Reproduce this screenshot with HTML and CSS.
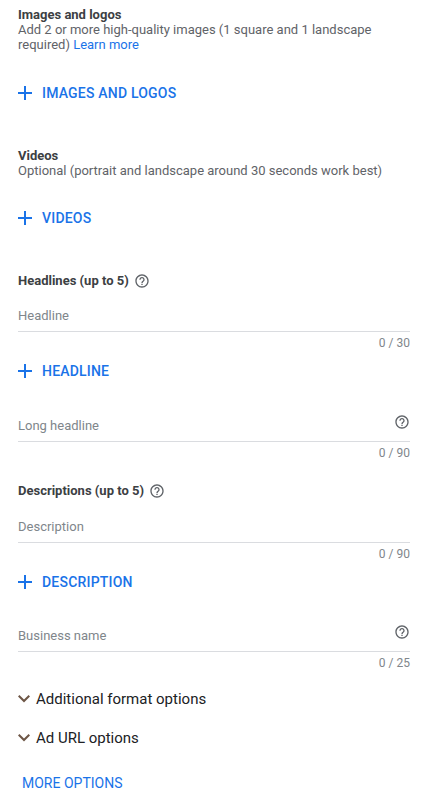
FILE: index.html
```
<!DOCTYPE html>
<html>
<head>
<meta charset="utf-8">
<link rel="stylesheet" href="styles.css">
</head>
<body>
<div class="page">
  <div class="title">Images and logos</div>
  <div class="desc">Add 2 or more high-quality images (1 square and 1 landscape required) <a class="link">Learn more</a></div>
  <div class="add add-images"><svg class="plus" viewBox="5 5 14 14"><path d="M19 13h-6v6h-2v-6H5v-2h6V5h2v6h6v2z"/></svg><span>IMAGES AND LOGOS</span></div>

  <div class="title title-videos">Videos</div>
  <div class="desc">Optional (portrait and landscape around 30 seconds work best)</div>
  <div class="add add-videos"><svg class="plus" viewBox="5 5 14 14"><path d="M19 13h-6v6h-2v-6H5v-2h6V5h2v6h6v2z"/></svg><span>VIDEOS</span></div>

  <div class="label label-headlines">Headlines (up to 5) <svg class="help" viewBox="0 0 24 24"><path d="M11 18h2v-2h-2v2zm1-16C6.48 2 2 6.48 2 12s4.48 10 10 10 10-4.48 10-10S17.52 2 12 2zm0 18c-4.41 0-8-3.59-8-8s3.59-8 8-8 8 3.59 8 8-3.59 8-8 8zm0-14c-2.21 0-4 1.79-4 4h2c0-1.1.9-2 2-2s2 .9 2 2c0 2-3 1.75-3 5h2c0-2.25 3-2.5 3-5 0-2.21-1.79-4-4-4z"/></svg></div>
  <div class="field field-headline"><span class="ph">Headline</span></div>
  <div class="count">0 / 30</div>
  <div class="add add-headline"><svg class="plus" viewBox="5 5 14 14"><path d="M19 13h-6v6h-2v-6H5v-2h6V5h2v6h6v2z"/></svg><span>HEADLINE</span></div>

  <div class="field field-long"><span class="ph">Long headline</span><svg class="help help-field" viewBox="0 0 24 24"><path d="M11 18h2v-2h-2v2zm1-16C6.48 2 2 6.48 2 12s4.48 10 10 10 10-4.48 10-10S17.52 2 12 2zm0 18c-4.41 0-8-3.59-8-8s3.59-8 8-8 8 3.59 8 8-3.59 8-8 8zm0-14c-2.21 0-4 1.79-4 4h2c0-1.1.9-2 2-2s2 .9 2 2c0 2-3 1.75-3 5h2c0-2.25 3-2.5 3-5 0-2.21-1.79-4-4-4z"/></svg></div>
  <div class="count">0 / 90</div>

  <div class="label label-desc">Descriptions (up to 5) <svg class="help" viewBox="0 0 24 24"><path d="M11 18h2v-2h-2v2zm1-16C6.48 2 2 6.48 2 12s4.48 10 10 10 10-4.48 10-10S17.52 2 12 2zm0 18c-4.41 0-8-3.59-8-8s3.59-8 8-8 8 3.59 8 8-3.59 8-8 8zm0-14c-2.21 0-4 1.79-4 4h2c0-1.1.9-2 2-2s2 .9 2 2c0 2-3 1.75-3 5h2c0-2.25 3-2.5 3-5 0-2.21-1.79-4-4-4z"/></svg></div>
  <div class="field field-description"><span class="ph">Description</span></div>
  <div class="count">0 / 90</div>
  <div class="add add-description"><svg class="plus" viewBox="5 5 14 14"><path d="M19 13h-6v6h-2v-6H5v-2h6V5h2v6h6v2z"/></svg><span>DESCRIPTION</span></div>

  <div class="field field-business"><span class="ph">Business name</span><svg class="help help-field" viewBox="0 0 24 24"><path d="M11 18h2v-2h-2v2zm1-16C6.48 2 2 6.48 2 12s4.48 10 10 10 10-4.48 10-10S17.52 2 12 2zm0 18c-4.41 0-8-3.59-8-8s3.59-8 8-8 8 3.59 8 8-3.59 8-8 8zm0-14c-2.21 0-4 1.79-4 4h2c0-1.1.9-2 2-2s2 .9 2 2c0 2-3 1.75-3 5h2c0-2.25 3-2.5 3-5 0-2.21-1.79-4-4-4z"/></svg></div>
  <div class="count">0 / 25</div>

  <div class="expander exp-format"><svg class="chev" viewBox="6 8.59 12 7.41"><path d="M16.59 8.59L12 13.17 7.41 8.59 6 10l6 6 6-6z"/></svg><span>Additional format options</span></div>
  <div class="expander exp-url"><svg class="chev" viewBox="6 8.59 12 7.41"><path d="M16.59 8.59L12 13.17 7.41 8.59 6 10l6 6 6-6z"/></svg><span>Ad URL options</span></div>

  <div class="more">MORE OPTIONS</div>
</div>
</body>
</html>
```
FILE: styles.css
```
html, body {
  margin: 0;
  padding: 0;
  background: #ffffff;
}
body {
  font-family: Roboto, "Liberation Sans", Arial, sans-serif;
  color: #202124;
}
.page {
  padding: 7px 20px 0 18px;
  display: flex;
  flex-direction: column;
}
.title {
  font-size: 13px;
  font-weight: 700;
  line-height: 15px;
  color: #3c4043;
}
.title-videos {
  margin-top: 43px;
}
.desc {
  font-size: 13px;
  line-height: 15px;
  color: #5f6368;
}
.link {
  color: #1a73e8;
}
.add {
  display: flex;
  align-items: center;
  height: 24px;
  color: #1a73e8;
  font-size: 14px;
  font-weight: 500;
  letter-spacing: 0.2px;
}
.plus {
  width: 14px;
  height: 14px;
  fill: #1a73e8;
  margin-right: 10px;
}
.add-images { margin-top: 29px; }
.add-videos { margin-top: 28px; }
.add-headline { margin-top: 9px; }
.add-description { margin-top: 9px; }
.label {
  display: flex;
  align-items: center;
  font-size: 13px;
  font-weight: 700;
  line-height: 16px;
  color: #3c4043;
}
.label .help {
  margin-left: 5px;
}
.label-headlines { margin-top: 43px; }
.label-desc { margin-top: 23px; }
.help {
  width: 16px;
  height: 16px;
  fill: #5f6368;
}
.field {
  display: flex;
  align-items: center;
  justify-content: space-between;
  height: 20px;
  padding-bottom: 6px;
  border-bottom: 1px solid #dadce0;
}
.ph {
  font-size: 13px;
  color: #80868b;
}
.help-field {
  margin-top: -6px;
}
.field-headline { margin-top: 16px; }
.field-long { margin-top: 32px; }
.field-description { margin-top: 17px; }
.field-business { margin-top: 31px; }
.count {
  margin-top: 4px;
  font-size: 12px;
  line-height: 14px;
  color: #80868b;
  text-align: right;
}
.expander {
  display: flex;
  align-items: center;
  height: 20px;
  font-size: 15px;
  color: #202124;
}
.chev {
  width: 12px;
  height: 7.4px;
  fill: #6d5646;
  margin-right: 6px;
}
.exp-format { margin-top: 19px; }
.exp-url { margin-top: 19px; }
.more {
  margin-top: 25px;
  padding-left: 4px;
  font-size: 14px;
  line-height: 20px;
  color: #1a73e8;
}
```
